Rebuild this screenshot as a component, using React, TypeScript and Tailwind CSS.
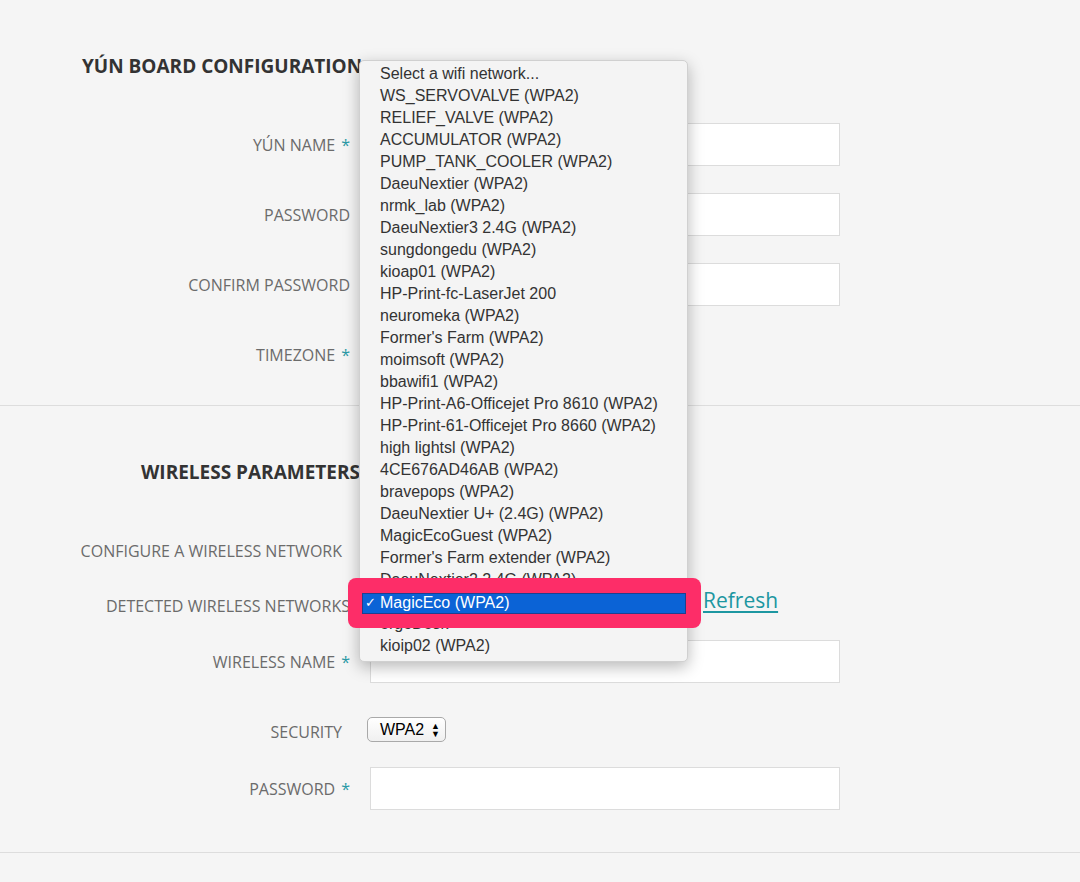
const networks = [
  "Select a wifi network...",
  "WS_SERVOVALVE (WPA2)",
  "RELIEF_VALVE (WPA2)",
  "ACCUMULATOR (WPA2)",
  "PUMP_TANK_COOLER (WPA2)",
  "DaeuNextier (WPA2)",
  "nrmk_lab (WPA2)",
  "DaeuNextier3 2.4G (WPA2)",
  "sungdongedu (WPA2)",
  "kioap01 (WPA2)",
  "HP-Print-fc-LaserJet 200",
  "neuromeka (WPA2)",
  "Former's Farm (WPA2)",
  "moimsoft (WPA2)",
  "bbawifi1 (WPA2)",
  "HP-Print-A6-Officejet Pro 8610 (WPA2)",
  "HP-Print-61-Officejet Pro 8660 (WPA2)",
  "high lightsl (WPA2)",
  "4CE676AD46AB (WPA2)",
  "bravepops (WPA2)",
  "DaeuNextier U+ (2.4G) (WPA2)",
  "MagicEcoGuest (WPA2)",
  "Former's Farm extender (WPA2)",
  "DaeuNextier2 2.4G (WPA2)",
  "MagicEco (WPA2)",
  "ergoDesk",
  "kioip02 (WPA2)",
];

const Star = () => <span className="text-[#2b9aa6] ml-[6px]">*</span>;

const Label = ({ children, className = "" }: { children: React.ReactNode; className?: string }) => (
  <div className={`w-[350px] text-right text-[16px] text-[#6b6b6b] ${className}`}>{children}</div>
);

const TextInput = () => <div className="ml-[20px] w-[470px] h-[43px] bg-white border border-[#dcdcdc]" />;

const App = () => {
  return (
    <div className="relative w-full min-h-[882px] bg-[#f5f5f5] overflow-hidden font-['Open_Sans',sans-serif]">
      {/* Yún board configuration */}
      <div className="pt-[54px] pb-[29px] border-b border-[#dddddd]">
        <h2 className="pl-[82px] h-[24px] leading-[24px] text-[19px] font-bold text-[#333]">YÚN BOARD CONFIGURATION</h2>
        <div className="mt-[45px] flex items-center h-[43px]">
          <Label>YÚN NAME<Star /></Label>
          <TextInput />
        </div>
        <div className="mt-[27px] flex items-center h-[43px]">
          <Label>PASSWORD</Label>
          <TextInput />
        </div>
        <div className="mt-[27px] flex items-center h-[43px]">
          <Label>CONFIRM PASSWORD</Label>
          <TextInput />
        </div>
        <div className="mt-[27px] flex items-center h-[43px]">
          <Label>TIMEZONE<Star /></Label>
        </div>
      </div>

      {/* Wireless parameters */}
      <div className="pt-[54px] pb-[42px] border-b border-[#dddddd]">
        <h2 className="pl-[141px] h-[24px] leading-[24px] text-[19px] font-bold text-[#333]">WIRELESS PARAMETERS</h2>
        <div className="mt-[45px] flex items-center h-[43px]">
          <Label className="pr-[8px]">CONFIGURE A WIRELESS NETWORK</Label>
        </div>
        <div className="mt-[12px] flex items-center h-[43px]">
          <Label>DETECTED WIRELESS NETWORKS</Label>
          <div className="ml-[20px] w-[333px]" />
          <a href="#" className="pb-[9px] text-[21px] text-[#1d97a1] underline underline-offset-[3px]">Refresh</a>
        </div>
        <div className="mt-[13px] flex items-center h-[43px]">
          <Label>WIRELESS NAME<Star /></Label>
          <TextInput />
        </div>
        <div className="mt-[25px] flex items-center h-[43px]">
          <Label className="pr-[8px] pt-[5px]">SECURITY</Label>
          <div className="ml-[17px] w-[79px] h-[25px] rounded-[5px] border border-[#a9a9a9] bg-gradient-to-b from-white to-[#f0f0f0] flex items-center pl-[12px] pr-[5px] font-['Liberation_Sans',sans-serif] text-[16px] text-black">
            <span className="flex-1">WPA2</span>
            <span className="flex flex-col text-[9px] leading-[8px]">
              <span>▲</span>
              <span>▼</span>
            </span>
          </div>
        </div>
        <div className="mt-[16px] flex items-center h-[43px]">
          <Label>PASSWORD<Star /></Label>
          <TextInput />
        </div>
      </div>

      {/* open network dropdown */}
      <div className="absolute left-[359px] top-[60px] w-[329px] h-[602px] bg-[#f4f4f4] border border-[#d0d0d0] rounded-[5px] shadow-[0_5px_16px_rgba(0,0,0,0.28)] pt-[2px] font-['Liberation_Sans',sans-serif] text-[16px] text-[#333]">
        {networks.map((n) => (
          <div key={n} className="h-[22px] leading-[22px] pl-[20px] whitespace-nowrap">{n}</div>
        ))}
      </div>

      {/* highlighted selection */}
      <div className="absolute left-[348px] top-[578px] w-[353px] h-[50px] rounded-[8px] bg-[#fd2d68] flex items-center pl-[14px]">
        <div className="w-[324px] h-[21px] bg-[#0b63d6] border border-[#1f3f8f] flex items-center font-['Liberation_Sans',sans-serif] text-[16px] text-white">
          <span className="w-[17px] pl-[2px] text-[13px]">✓</span>
          <span>MagicEco (WPA2)</span>
        </div>
      </div>
    </div>
  );
};

export default App;
